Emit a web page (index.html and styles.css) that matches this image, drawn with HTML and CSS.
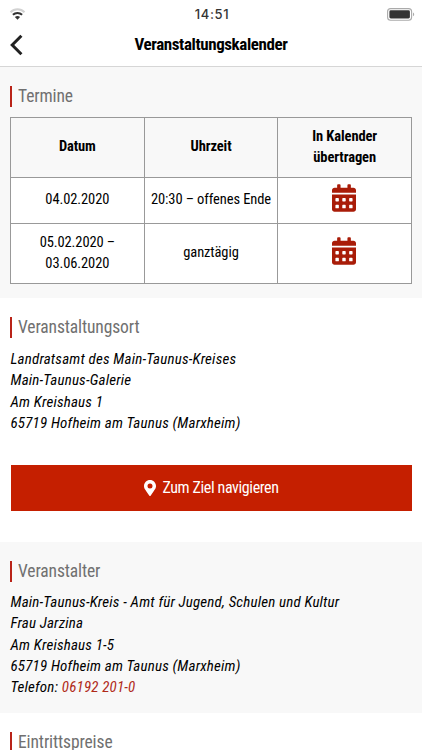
FILE: index.html
```
<!DOCTYPE html>
<html lang="de">
<head>
    <meta charset="UTF-8">
    <meta name="viewport" content="width=device-width, initial-scale=1.0">
    <title>Veranstaltungskalender</title>
    <link rel="stylesheet" href="styles.css">
</head>
<body>
    <header class="header">
        <div class="status-bar">
            <svg class="wifi" viewBox="0 0 16 12" fill="none">
                <path d="M1 4.2C5 .2 11 .2 15 4.2" stroke="#d2d2d2" stroke-width="2"/>
                <path d="M3.4 6.8C6 4.3 10 4.3 12.6 6.8" stroke="#333" stroke-width="2"/>
                <path d="M5.4 9C6.9 7.6 9.1 7.6 10.6 9L8 11.8z" fill="#333"/>
            </svg>
            <span class="time">14:51</span>
            <svg class="battery" viewBox="0 0 28 13">
                <rect x=".6" y=".6" width="24" height="11.6" rx="3" fill="none" stroke="#aaa" stroke-width="1.1"/>
                <rect x="2.4" y="2.3" width="20.5" height="8.2" rx="1.4" fill="#333"/>
                <path d="M26 4.5c1.6.5 1.6 3.3 0 3.8z" fill="#aaa"/>
            </svg>
        </div>
        <div class="title-bar">
            <a class="back" href="#" aria-label="Zurück">
                <svg viewBox="0 0 14 22"><path d="M11.4 1.8L2.2 11l9.2 9.2" fill="none" stroke="#222" stroke-width="3"/></svg>
            </a>
            <h1>Veranstaltungskalender</h1>
        </div>
    </header>

    <section class="section grey dates">
        <h2>Termine</h2>
        <table>
            <tr class="head-row">
                <th>Datum</th>
                <th>Uhrzeit</th>
                <th>In Kalender<br>übertragen</th>
            </tr>
            <tr class="row-single">
                <td>04.02.2020</td>
                <td>20:30 – offenes Ende</td>
                <td class="icon-cell">
                    <svg class="calendar" viewBox="0 0 448 512"><path fill-rule="evenodd" d="M0 464c0 26.500 21.500 48 48 48h352c26.500 0 48-21.500 48-48V192H0zM320 268c0-6.600 5.400-12 12-12h40c6.600 0 12 5.400 12 12v40c0 6.600-5.400 12-12 12h-40c-6.600 0-12-5.400-12-12zm0 128c0-6.600 5.400-12 12-12h40c6.600 0 12 5.400 12 12v40c0 6.600-5.400 12-12 12h-40c-6.600 0-12-5.400-12-12zM192 268c0-6.600 5.400-12 12-12h40c6.600 0 12 5.400 12 12v40c0 6.600-5.400 12-12 12h-40c-6.600 0-12-5.400-12-12zm0 128c0-6.600 5.400-12 12-12h40c6.600 0 12 5.400 12 12v40c0 6.600-5.400 12-12 12h-40c-6.600 0-12-5.400-12-12zM64 268c0-6.600 5.400-12 12-12h40c6.600 0 12 5.400 12 12v40c0 6.600-5.400 12-12 12H76c-6.600 0-12-5.400-12-12zm0 128c0-6.600 5.400-12 12-12h40c6.600 0 12 5.400 12 12v40c0 6.600-5.400 12-12 12H76c-6.600 0-12-5.400-12-12zM400 64h-48V16c0-8.800-7.200-16-16-16h-32c-8.800 0-16 7.200-16 16v48H160V16c0-8.800-7.200-16-16-16h-32c-8.800 0-16 7.200-16 16v48H48C21.500 64 0 85.500 0 112v48h448v-48c0-26.500-21.500-48-48-48z"/></svg>
                </td>
            </tr>
            <tr class="row-double">
                <td>05.02.2020 –<br>03.06.2020</td>
                <td>ganztägig</td>
                <td class="icon-cell">
                    <svg class="calendar" viewBox="0 0 448 512"><path fill-rule="evenodd" d="M0 464c0 26.500 21.500 48 48 48h352c26.500 0 48-21.500 48-48V192H0zM320 268c0-6.600 5.400-12 12-12h40c6.600 0 12 5.400 12 12v40c0 6.600-5.400 12-12 12h-40c-6.600 0-12-5.400-12-12zm0 128c0-6.600 5.400-12 12-12h40c6.600 0 12 5.400 12 12v40c0 6.600-5.400 12-12 12h-40c-6.600 0-12-5.400-12-12zM192 268c0-6.600 5.400-12 12-12h40c6.600 0 12 5.400 12 12v40c0 6.600-5.400 12-12 12h-40c-6.600 0-12-5.400-12-12zm0 128c0-6.600 5.400-12 12-12h40c6.600 0 12 5.400 12 12v40c0 6.600-5.400 12-12 12h-40c-6.600 0-12-5.400-12-12zM64 268c0-6.600 5.400-12 12-12h40c6.600 0 12 5.400 12 12v40c0 6.600-5.400 12-12 12H76c-6.600 0-12-5.400-12-12zm0 128c0-6.600 5.400-12 12-12h40c6.600 0 12 5.400 12 12v40c0 6.600-5.400 12-12 12H76c-6.600 0-12-5.400-12-12zM400 64h-48V16c0-8.800-7.200-16-16-16h-32c-8.800 0-16 7.200-16 16v48H160V16c0-8.800-7.200-16-16-16h-32c-8.800 0-16 7.200-16 16v48H48C21.500 64 0 85.500 0 112v48h448v-48c0-26.500-21.500-48-48-48z"/></svg>
                </td>
            </tr>
        </table>
    </section>

    <section class="section location">
        <h2>Veranstaltungsort</h2>
        <address>
            Landratsamt des Main-Taunus-Kreises<br>
            Main-Taunus-Galerie<br>
            Am Kreishaus 1<br>
            65719 Hofheim am Taunus (Marxheim)
        </address>
        <a class="button" href="#">
            <svg class="pin" viewBox="0 0 384 512"><path fill-rule="evenodd" d="M172 502C27 291 0 269 0 192 0 86 86 0 192 0s192 86 192 192c0 77-27 99-172 310-10 13-30 13-40 0zM192 272a80 80 0 1 0 0-160 80 80 0 0 0 0 160z"/></svg>
            <span>Zum Ziel navigieren</span>
        </a>
    </section>

    <section class="section grey organizer">
        <h2>Veranstalter</h2>
        <address>
            Main-Taunus-Kreis - Amt für Jugend, Schulen und Kultur<br>
            Frau Jarzina<br>
            Am Kreishaus 1-5<br>
            65719 Hofheim am Taunus (Marxheim)<br>
            Telefon: <a href="tel:061922010">06192 201-0</a>
        </address>
    </section>

    <section class="section">
        <h2>Eintrittspreise</h2>
    </section>
</body>
</html>
```
FILE: styles.css
```
* {
    box-sizing: border-box;
}

body {
    margin: 0;
    height: 750px;
    overflow: hidden;
    background-color: #fff;
    color: #000;
    font-family: "Roboto Condensed", Roboto, sans-serif;
    font-stretch: 75%;
    font-size: 14.5px;
    line-height: 21.3px;
}

.header {
    height: 67px;
    border-bottom: 1px solid #d6d6d6;
}

.status-bar {
    display: grid;
    grid-template-columns: 1fr auto 1fr;
    align-items: center;
    height: 28px;
    padding: 0 7px 0 9px;
}

.wifi {
    width: 17px;
    height: 12px;
}

.time {
    padding-top: 1px;
    font-family: Inter, sans-serif;
    font-stretch: 100%;
    font-size: 13px;
    font-weight: 500;
    letter-spacing: 0.6px;
    color: #333;
}

.battery {
    width: 28px;
    height: 13px;
    justify-self: end;
}

.title-bar {
    display: grid;
    grid-template-columns: 40px 1fr 40px;
    align-items: center;
    height: 33px;
}

.back {
    padding-left: 10px;
}

.back svg {
    display: block;
    width: 14px;
    height: 22px;
}

h1 {
    margin: 0;
    text-align: center;
    font-size: 17px;
    font-weight: bold;
    letter-spacing: -0.4px;
}

.section {
    padding: 19px 10px 0;
}

.grey {
    background-color: #f8f8f8;
}

.dates {
    height: 231px;
}

.location {
    height: 244px;
}

.organizer {
    height: 171px;
}

h2 {
    height: 21px;
    margin: 0 0 10px;
    padding-left: 6px;
    border-left: 2px solid #b92318;
    color: #707070;
    font-size: 17.5px;
    font-weight: 400;
    line-height: 20px;
    letter-spacing: -0.12px;
}

table {
    width: 402px;
    border-collapse: collapse;
    table-layout: fixed;
    text-align: center;
    letter-spacing: -0.1px;
}

th, td {
    padding: 0 0 1px;
    border: 1px solid #999;
}

td {
    background-color: #fff;
}

.icon-cell {
    padding: 0 1px 5px 0;
}

.head-row {
    height: 60px;
}

.row-single {
    height: 46px;
}

.row-double {
    height: 60px;
}

.calendar {
    display: block;
    width: 24px;
    height: 28px;
    margin: 0 auto;
    fill: #a91c08;
}

address {
    padding-left: 0.5px;
    font-size: 15px;
    font-style: italic;
    letter-spacing: 0.18px;
}

.location address {
    padding-top: 1px;
}

address a {
    color: #b02a18;
    text-decoration: none;
}

.button {
    display: flex;
    justify-content: center;
    align-items: center;
    gap: 6px;
    height: 46px;
    margin: 31px 0 0 1px;
    padding-bottom: 1px;
    background-color: #c51f00;
    color: #fff;
    font-size: 16px;
    font-weight: 400;
    letter-spacing: -0.38px;
    text-decoration: none;
}

.pin {
    width: 12px;
    height: 16px;
    fill: #fff;
}
```
